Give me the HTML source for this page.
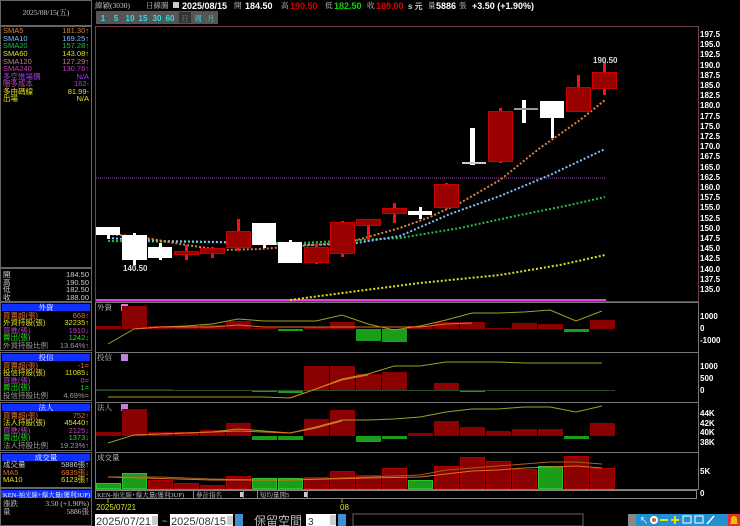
<!DOCTYPE html>
<html><head><meta charset="utf-8"><style>
html,body{margin:0;padding:0;background:#000;width:740px;height:526px;overflow:hidden}
svg{display:block}
text{font-family:"Liberation Sans","Noto Sans CJK TC",sans-serif}
.s{font-family:"Liberation Serif","Noto Serif CJK SC",serif;font-size:7.5px}
.t{font-family:"Liberation Serif","Noto Serif CJK SC",serif;font-size:6.5px}
.ax{font-size:8px;fill:#fff;font-weight:bold}
</style></head><body>
<svg width="740" height="526" viewBox="0 0 740 526" xmlns="http://www.w3.org/2000/svg">
<rect width="740" height="526" fill="#000"/>
<g fill="none" stroke="#666" stroke-width="1">
<rect x="0.5" y="0.5" width="91" height="25"/>
<rect x="0.5" y="26.5" width="91" height="241"/>
<rect x="0.5" y="268.5" width="91" height="33"/>
<rect x="0.5" y="302.5" width="91" height="48"/>
<rect x="0.5" y="352.5" width="91" height="48"/>
<rect x="0.5" y="402.5" width="91" height="48"/>
<rect x="0.5" y="452.5" width="91" height="35"/>
<rect x="0.5" y="488.5" width="91" height="37"/>
</g>
<text x="46" y="15" class="s" fill="#ccc" text-anchor="middle">2025/08/15(五)</text>
<g class="s">
<text x="3" y="33" fill="#e08040">SMA5</text><text x="89" y="33" fill="#e08040" text-anchor="end">181.30↑</text>
<text x="3" y="41" fill="#80c0ff">SMA10</text><text x="89" y="41" fill="#80c0ff" text-anchor="end">169.25↑</text>
<text x="3" y="48" fill="#20c040">SMA20</text><text x="89" y="48" fill="#20c040" text-anchor="end">157.28↑</text>
<text x="3" y="56" fill="#e0e020">SMA60</text><text x="89" y="56" fill="#e0e020" text-anchor="end">143.08↑</text>
<text x="3" y="64" fill="#c08080">SMA120</text><text x="89" y="64" fill="#c08080" text-anchor="end">127.29↑</text>
<text x="3" y="71" fill="#c040c0">SMA240</text><text x="89" y="71" fill="#c040c0" text-anchor="end">130.76↑</text>
<text x="3" y="79" fill="#a040e0">多空進場價</text><text x="89" y="79" fill="#a040e0" text-anchor="end">N/A</text>
<text x="3" y="86" fill="#c040c0">睏多成本</text><text x="89" y="86" fill="#c040c0" text-anchor="end">162-</text>
<text x="3" y="94" fill="#e0e020">多由碼線</text><text x="89" y="94" fill="#e0e020" text-anchor="end">81.99-</text>
<text x="3" y="101" fill="#e0e020">出場</text><text x="89" y="101" fill="#e0e020" text-anchor="end">N/A</text>
<text x="3" y="277" fill="#ccc">開</text><text x="89" y="277" fill="#ccc" text-anchor="end">184.50</text>
<text x="3" y="285" fill="#ccc">高</text><text x="89" y="285" fill="#ccc" text-anchor="end">190.50</text>
<text x="3" y="292" fill="#ccc">低</text><text x="89" y="292" fill="#ccc" text-anchor="end">182.50</text>
<text x="3" y="300" fill="#ccc">收</text><text x="89" y="300" fill="#ccc" text-anchor="end">188.00</text>
</g>
<g>
<rect x="2" y="304" width="88" height="7" fill="#1030ff"/><text x="46" y="310" class="s" fill="#fff" text-anchor="middle">外資</text>
<rect x="2" y="354" width="88" height="7" fill="#1030ff"/><text x="46" y="360" class="s" fill="#fff" text-anchor="middle">投信</text>
<rect x="2" y="404" width="88" height="7" fill="#1030ff"/><text x="46" y="410" class="s" fill="#fff" text-anchor="middle">法人</text>
<rect x="2" y="454" width="88" height="7" fill="#1030ff"/><text x="46" y="460" class="s" fill="#fff" text-anchor="middle">成交量</text>
</g>
<g class="s">
<text x="3" y="318" fill="#e07030">買賣超(張)</text><text x="89" y="318" fill="#e07030" text-anchor="end">668↑</text>
<text x="3" y="325" fill="#e0e020">外資持股(張)</text><text x="89" y="325" fill="#e0e020" text-anchor="end">32235↑</text>
<text x="3" y="333" fill="#c040c0">買進(張)</text><text x="89" y="333" fill="#c040c0" text-anchor="end">1910↓</text>
<text x="3" y="340" fill="#20e020">賣出(張)</text><text x="89" y="340" fill="#20e020" text-anchor="end">1242↓</text>
<text x="3" y="348" fill="#999">外資持股比例</text><text x="89" y="348" fill="#999" text-anchor="end">13.64%↑</text>
<text x="3" y="368" fill="#e07030">買賣超(張)</text><text x="89" y="368" fill="#e07030" text-anchor="end">-1=</text>
<text x="3" y="375" fill="#e0e020">投信持股(張)</text><text x="89" y="375" fill="#e0e020" text-anchor="end">11085↓</text>
<text x="3" y="383" fill="#c040c0">買進(張)</text><text x="89" y="383" fill="#c040c0" text-anchor="end">0=</text>
<text x="3" y="390" fill="#20e020">賣出(張)</text><text x="89" y="390" fill="#20e020" text-anchor="end">1=</text>
<text x="3" y="398" fill="#999">投信持股比例</text><text x="89" y="398" fill="#999" text-anchor="end">4.69%=</text>
<text x="3" y="418" fill="#e07030">買賣超(張)</text><text x="89" y="418" fill="#e07030" text-anchor="end">752↑</text>
<text x="3" y="425" fill="#e0e020">法人持股(張)</text><text x="89" y="425" fill="#e0e020" text-anchor="end">45440↑</text>
<text x="3" y="433" fill="#c040c0">買進(張)</text><text x="89" y="433" fill="#c040c0" text-anchor="end">2125↓</text>
<text x="3" y="440" fill="#20e020">賣出(張)</text><text x="89" y="440" fill="#20e020" text-anchor="end">1373↓</text>
<text x="3" y="448" fill="#999">法人持股比例</text><text x="89" y="448" fill="#999" text-anchor="end">19.23%↑</text>
<text x="3" y="467" fill="#ccc">成交量</text><text x="89" y="467" fill="#ccc" text-anchor="end">5886張↑</text>
<text x="3" y="475" fill="#e07030">MA5</text><text x="89" y="475" fill="#e07030" text-anchor="end">6835張↓</text>
<text x="3" y="482" fill="#e0e020">MA10</text><text x="89" y="482" fill="#e0e020" text-anchor="end">6123張↑</text>
</g>
<rect x="1" y="490" width="90" height="8" fill="#1030ff"/>
<text x="3" y="497" class="t" fill="#fff">KEN-袖光線+爆大量(獲利3UP)</text>
<text x="3" y="506" class="s" fill="#ccc">漲跌</text><text x="89" y="506" class="s" fill="#ccc" text-anchor="end">3.50 (+1.90%)</text>
<text x="3" y="514" class="s" fill="#ccc">量</text><text x="89" y="514" class="s" fill="#ccc" text-anchor="end">5886張</text>

<text x="95" y="8" class="s" fill="#ccc">緯穎(3030)</text>
<text x="146" y="8" class="s" fill="#ccc">日線圖</text>
<rect x="173" y="2" width="6" height="6" fill="#ccc"/>
<text x="182" y="9" font-size="9" font-weight="bold" fill="#fff">2025/08/15</text>
<text x="234" y="8" class="s" fill="#ccc">開</text><text x="245" y="9" font-size="9" font-weight="bold" fill="#fff">184.50</text>
<text x="281" y="8" class="s" fill="#ccc">高</text><text x="290" y="9" font-size="9" font-weight="bold" fill="#e00000">190.50</text>
<text x="325" y="8" class="s" fill="#ccc">低</text><text x="334" y="9" font-size="9" font-weight="bold" fill="#10d010">182.50</text>
<text x="367" y="8" class="s" fill="#ccc">收</text><text x="376" y="9" font-size="9" font-weight="bold" fill="#e00000">188.00</text>
<text x="408" y="9" font-size="8" font-weight="bold" fill="#ccc">s 元</text>
<text x="428" y="8" class="s" fill="#ccc">量</text><text x="436" y="9" font-size="9" font-weight="bold" fill="#fff">5886</text>
<text x="459" y="8" class="s" fill="#ccc">張</text>
<text x="472" y="9" font-size="9" font-weight="bold" fill="#fff">+3.50 (+1.90%)</text>
<rect x="96" y="11" width="122" height="13" fill="#555"/>
<g font-size="8" font-weight="bold" fill="#2ee0e0" text-anchor="middle">
<text x="103" y="21">1</text><text x="116" y="21">5</text><text x="130" y="21">10</text><text x="143" y="21">15</text><text x="157" y="21">30</text><text x="170" y="21">60</text>
</g>
<rect x="179" y="12" width="12" height="11" fill="#333"/>
<text x="185" y="21" class="s" fill="#888" text-anchor="middle">日</text>
<text x="198" y="21" class="s" fill="#2ee0e0" text-anchor="middle">週</text>
<text x="211" y="21" class="s" fill="#2ee0e0" text-anchor="middle">月</text>

<rect x="95.5" y="26.5" width="603" height="275" fill="none" stroke="#704050"/>
<g fill="none" stroke="#777"><line x1="95" y1="302.5" x2="699" y2="302.5"/><line x1="95" y1="352.5" x2="699" y2="352.5"/><line x1="95" y1="402.5" x2="699" y2="402.5"/><line x1="95" y1="452.5" x2="699" y2="452.5"/><line x1="95" y1="489.5" x2="699" y2="489.5"/><line x1="698.5" y1="302" x2="698.5" y2="490"/><line x1="95.5" y1="302" x2="95.5" y2="490"/></g>

<g class="ax">
<text x="700" y="37">197.5</text><text x="700" y="47">195.0</text><text x="700" y="57">192.5</text><text x="700" y="68">190.0</text><text x="700" y="78">187.5</text><text x="700" y="88">185.0</text><text x="700" y="98">182.5</text><text x="700" y="108">180.0</text><text x="700" y="119">177.5</text><text x="700" y="129">175.0</text><text x="700" y="139">172.5</text><text x="700" y="149">170.0</text><text x="700" y="159">167.5</text><text x="700" y="170">165.0</text><text x="700" y="180">162.5</text><text x="700" y="190">160.0</text><text x="700" y="200">157.5</text><text x="700" y="210">155.0</text><text x="700" y="221">152.5</text><text x="700" y="231">150.0</text><text x="700" y="241">147.5</text><text x="700" y="251">145.0</text><text x="700" y="261">142.5</text><text x="700" y="272">140.0</text><text x="700" y="282">137.5</text><text x="700" y="292">135.0</text>
<text x="700" y="319">1000</text><text x="700" y="331">0</text><text x="700" y="343">-1000</text>
<text x="700" y="369">1000</text><text x="700" y="381">500</text><text x="700" y="393">0</text>
<text x="700" y="416">44K</text><text x="700" y="426">42K</text><text x="700" y="435">40K</text><text x="700" y="445">38K</text>
<text x="700" y="474">5K</text>
<text x="700" y="496">0</text>
</g>

<line x1="96" y1="178" x2="605" y2="178" stroke="#a040c0" stroke-dasharray="1,1"/>
<rect x="96" y="299" width="510" height="2" fill="#e040e0"/>
<g fill="none" stroke-width="2" stroke-dasharray="2,2">
<polyline stroke="#e0e020" points="290,300 350,292 420,283 500,275 560,265 605,255"/>
<polyline stroke="#20c040" points="108,241 200,242 300,243 400,238 460,228 520,215 570,205 605,197"/>
<polyline stroke="#80c0ff" points="108,238 160,241 220,242 300,245 350,244 400,236 450,214 500,196 550,175 605,149"/>
<polyline stroke="#e08040" points="108,234 140,237 180,244 220,250 260,249 300,246 350,242 400,228 430,217 460,203 500,180 540,148 580,120 605,100"/>
</g>

<g fill="#ff1010">
<rect x="185" y="245" width="3" height="15"/><rect x="211" y="247" width="3" height="11"/><rect x="237" y="219" width="3" height="32"/><rect x="315" y="244" width="3" height="20"/><rect x="341" y="221" width="3" height="36"/><rect x="367" y="219" width="3" height="21"/><rect x="393" y="203" width="3" height="20"/><rect x="445" y="183" width="3" height="26"/><rect x="499" y="108" width="3" height="55"/><rect x="577" y="75" width="3" height="36"/><rect x="603" y="62" width="3" height="33"/>
</g>
<g fill="#990000" stroke="#cc0000" stroke-width="1">
<rect x="174.5" y="251.5" width="24" height="3"/><rect x="200.5" y="248.5" width="24" height="5"/><rect x="226.5" y="231.5" width="24" height="16"/><rect x="304.5" y="247.5" width="24" height="15"/><rect x="330.5" y="222.5" width="24" height="31"/><rect x="356.5" y="219.5" width="24" height="6"/><rect x="382.5" y="208.5" width="24" height="5"/><rect x="434.5" y="184.5" width="24" height="23"/><rect x="488.5" y="111.5" width="24" height="50"/><rect x="566.5" y="87.5" width="24" height="24"/><rect x="592.5" y="72.5" width="24" height="16"/>
</g>
<g fill="#fff">
<rect x="107" y="235" width="3" height="4"/><rect x="96" y="227" width="24" height="8"/>
<rect x="133" y="233" width="3" height="32"/><rect x="122" y="235" width="25" height="25"/>
<rect x="159" y="243" width="3" height="17"/><rect x="148" y="247" width="24" height="11"/>
<rect x="263" y="244" width="3" height="4"/><rect x="252" y="223" width="24" height="22"/>
<rect x="289" y="240" width="3" height="3"/><rect x="278" y="242" width="24" height="21"/>
<rect x="419" y="207" width="3" height="12"/><rect x="408" y="211" width="24" height="4"/>
<rect x="470" y="128" width="5" height="37"/><rect x="462" y="162" width="24" height="2" fill="#ccc"/>
<rect x="522" y="100" width="4" height="23"/><rect x="514" y="108" width="24" height="2" fill="#999"/>
<rect x="551" y="118" width="3" height="20"/><rect x="540" y="101" width="24" height="17"/>
</g>
<text x="123" y="271" font-size="8" font-weight="bold" fill="#ddd">140.50</text>
<text x="593" y="63" font-size="8" font-weight="bold" fill="#ddd">190.50</text>

<text x="97" y="310" class="s" fill="#ccc">外資</text><rect x="121" y="304" width="7" height="7" fill="#c080e0"/>
<g fill="#8b0000">
<rect x="96" y="326" width="25" height="3"/><rect x="122" y="306" width="25" height="23"/><rect x="148" y="326" width="25" height="3"/><rect x="174" y="326" width="25" height="3"/><rect x="200" y="325" width="25" height="4"/><rect x="226" y="321" width="25" height="8"/><rect x="252" y="328" width="25" height="1"/><rect x="304" y="327" width="25" height="2"/><rect x="330" y="322" width="25" height="7"/><rect x="408" y="326" width="25" height="3"/><rect x="434" y="322" width="25" height="7"/><rect x="460" y="322" width="25" height="7"/><rect x="486" y="328" width="25" height="1"/><rect x="512" y="323" width="25" height="6"/><rect x="538" y="324" width="25" height="5"/><rect x="590" y="320" width="25" height="9"/>
</g>
<g fill="#1a9e1a"><rect x="278" y="329" width="25" height="2"/><rect x="356" y="329" width="25" height="12"/><rect x="382" y="329" width="25" height="13"/><rect x="564" y="329" width="25" height="3"/></g>
<polyline fill="none" stroke="#a0a020" points="108,344 134,329 160,327 186,326 212,324 238,319 264,321 290,321 316,321 342,315 368,324 394,330 420,326 446,320 472,313 498,313 524,312 550,310 576,321 602,311"/>
<polyline fill="none" stroke="#e07020" points="134,329 160,327 212,327 238,325 264,327 420,327 446,324 472,323"/>

<text x="97" y="360" class="s" fill="#ccc">投信</text><rect x="121" y="354" width="7" height="7" fill="#c080e0"/>
<g fill="#8b0000"><rect x="304" y="366" width="25" height="24"/><rect x="330" y="366" width="25" height="24"/><rect x="356" y="374" width="25" height="16"/><rect x="382" y="372" width="25" height="18"/><rect x="434" y="383" width="25" height="7"/><rect x="96" y="389" width="77" height="1"/></g>
<g fill="#1a9e1a"><rect x="252" y="390" width="25" height="2"/><rect x="278" y="390" width="25" height="3"/><rect x="460" y="390" width="25" height="2"/></g>
<line x1="96" y1="390.5" x2="615" y2="390.5" stroke="#2a4a2a"/>
<polyline fill="none" stroke="#a0a020" points="108,397 264,397 290,398 316,389 342,379 368,374 394,366 420,366 446,362 498,362 524,363 602,363"/>
<polyline fill="none" stroke="#e07020" points="290,398 316,389 342,380 368,375"/>

<text x="97" y="410" class="s" fill="#ccc">法人</text><rect x="121" y="404" width="7" height="7" fill="#c080e0"/>
<g fill="#8b0000">
<rect x="96" y="432" width="25" height="4"/><rect x="122" y="409" width="25" height="27"/><rect x="148" y="432" width="25" height="4"/><rect x="174" y="432" width="25" height="4"/><rect x="200" y="430" width="25" height="6"/><rect x="226" y="423" width="25" height="13"/><rect x="304" y="419" width="25" height="17"/><rect x="330" y="410" width="25" height="26"/><rect x="408" y="433" width="25" height="3"/><rect x="434" y="421" width="25" height="15"/><rect x="460" y="427" width="25" height="9"/><rect x="486" y="431" width="25" height="5"/><rect x="512" y="429" width="25" height="7"/><rect x="538" y="429" width="25" height="7"/><rect x="590" y="423" width="25" height="13"/>
</g>
<g fill="#1a9e1a"><rect x="252" y="436" width="25" height="4"/><rect x="278" y="436" width="25" height="4"/><rect x="356" y="436" width="25" height="6"/><rect x="382" y="436" width="25" height="3"/><rect x="564" y="436" width="25" height="3"/></g>
<polyline fill="none" stroke="#a0a020" points="108,443 134,435 160,434 186,433 212,432 238,429 264,431 290,433 316,427 342,420 368,420 394,419 420,417 446,412 472,409 498,409 524,407 550,407 576,412 602,406"/>
<polyline fill="none" stroke="#e07020" points="134,435 238,431 290,433 316,428 342,421"/>

<text x="97" y="460" class="s" fill="#ccc">成交量</text>
<g fill="#8b0000" stroke="#aa0000">
<rect x="148.5" y="480.5" width="24" height="8"/><rect x="174.5" y="483.5" width="24" height="5"/><rect x="200.5" y="485.5" width="24" height="3"/><rect x="226.5" y="476.5" width="24" height="12"/><rect x="304.5" y="477.5" width="24" height="11"/><rect x="330.5" y="471.5" width="24" height="17"/><rect x="356.5" y="475.5" width="24" height="13"/><rect x="382.5" y="468.5" width="24" height="20"/><rect x="434.5" y="466.5" width="24" height="22"/><rect x="460.5" y="457.5" width="24" height="31"/><rect x="486.5" y="461.5" width="24" height="27"/><rect x="512.5" y="469.5" width="24" height="19"/><rect x="564.5" y="456.5" width="24" height="32"/><rect x="590.5" y="468.5" width="24" height="20"/>
</g>
<g fill="#1a9e1a" stroke="#30c030"><rect x="96.5" y="483.5" width="24" height="5"/><rect x="122.5" y="473.5" width="24" height="15"/><rect x="252.5" y="478.5" width="24" height="10"/><rect x="278.5" y="478.5" width="24" height="10"/><rect x="408.5" y="480.5" width="24" height="8"/><rect x="538.5" y="466.5" width="24" height="22"/></g>
<polyline fill="none" stroke="#a06020" points="108,477 160,477 212,479 264,480 316,479 368,477 420,475 446,470 472,468 498,466 524,464 550,462 576,462 602,464"/>
<polyline fill="none" stroke="#e07020" points="108,477 212,480 290,480 368,478 420,477 446,474 472,471 498,470 524,468 550,467 576,466 602,468"/>

<rect x="95.5" y="490.5" width="601" height="8" fill="none" stroke="#888"/>
<text x="97" y="497" class="t" fill="#ccc">KEN-袖光線+爆大量(獲利3UP)</text>
<rect x="193.5" y="490.5" width="50" height="8" fill="#000" stroke="#888"/><text x="196" y="497" class="t" fill="#ccc">參計指名</text><rect x="240" y="492" width="3" height="5" fill="#ccc"/>
<rect x="257.5" y="490.5" width="50" height="8" fill="#000" stroke="#888"/><text x="260" y="497" class="t" fill="#ccc">短均量開5</text><rect x="304" y="492" width="3" height="5" fill="#ccc"/>
<line x1="108" y1="499" x2="108" y2="503" stroke="#aa0"/><line x1="342" y1="499" x2="342" y2="503" stroke="#aa0"/>
<text x="96" y="510" font-size="8" fill="#e0e020">2025/07/21</text>
<text x="340" y="510" font-size="8" fill="#e0e020">08</text>

<rect x="95" y="514" width="63" height="12" fill="#fff"/><text x="96" y="525" font-family="Liberation Serif" font-size="11" fill="#333">2025/07/21</text>
<rect x="152" y="516" width="6" height="9" fill="#ccc"/>
<text x="162" y="524" font-size="9" fill="#ccc">~</text>
<rect x="170" y="514" width="63" height="12" fill="#fff"/><text x="171" y="525" font-family="Liberation Serif" font-size="11" fill="#333">2025/08/15</text>
<rect x="227" y="516" width="6" height="9" fill="#ccc"/>
<rect x="235" y="514" width="8" height="12" fill="#4090d0"/>
<text x="254" y="525" font-family="Noto Sans CJK TC" font-size="12" fill="#bbb">保留空間</text>
<rect x="306" y="514" width="30" height="12" fill="#fff"/><text x="308" y="525" font-size="10" fill="#333">3</text>
<rect x="330" y="515" width="6" height="10" fill="#ccc"/>
<rect x="338" y="514" width="8" height="12" fill="#4090d0"/>
<rect x="353" y="514" width="230" height="12" fill="#000" stroke="#666"/>
<rect x="636" y="514" width="104" height="12" fill="#2090d0"/>
<rect x="628" y="514" width="8" height="12" fill="#888"/>
<g fill="#fff" font-size="9" text-anchor="middle"><text x="644" y="524">↖</text></g>
<circle cx="654" cy="520" r="4" fill="#fff"/><circle cx="654" cy="520" r="2" fill="#e06020"/>
<rect x="660" y="519" width="8" height="2" fill="#f0e000"/>
<rect x="671" y="519" width="8" height="2" fill="#f0e000"/><rect x="674" y="516" width="2" height="8" fill="#f0e000"/>
<rect x="683" y="516" width="8" height="7" fill="none" stroke="#fff"/>
<rect x="695" y="516" width="8" height="7" fill="none" stroke="#fff"/>
<line x1="707" y1="524" x2="714" y2="516" stroke="#fff" stroke-width="1.5"/>
<rect x="728" y="514" width="12" height="12" fill="#e03030"/><path d="M730 524h8l-1-2v-3a3 3 0 0 0-6 0v3z" fill="#f0c000"/>
</svg>
</body></html>
